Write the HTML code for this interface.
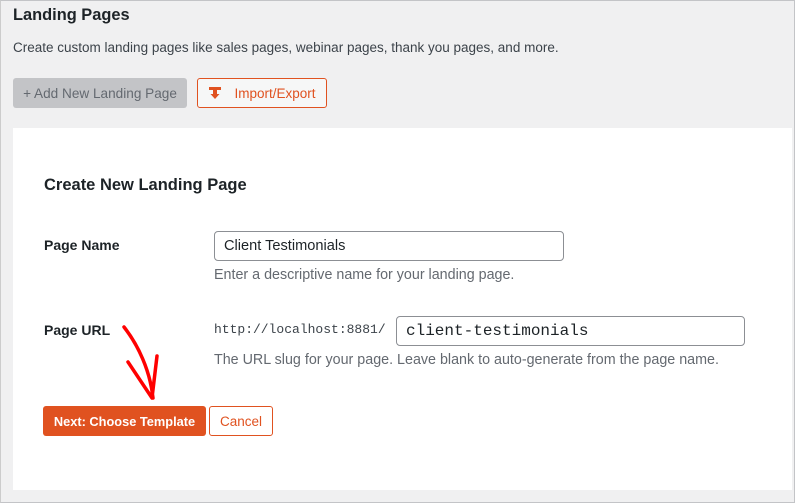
<!DOCTYPE html>
<html><head><style>
*{margin:0;padding:0;box-sizing:border-box}
body{width:795px;height:503px;background:#f0f0f1;font-family:"Liberation Sans",sans-serif;color:#1d2327;position:relative;overflow:hidden}
.frame{position:absolute;left:0;top:0;width:795px;height:503px;border:1px solid #c3c4c7;border-left-color:#ccc}
.a{position:absolute;white-space:nowrap}
.card{position:absolute;left:13px;top:128px;width:779px;height:362px;background:#fff}
.inp{position:absolute;border:1px solid #8c8f94;border-radius:4px;background:#fff;padding-left:9px;font-size:14.6px;color:#1d2327}
.btn{position:absolute;border-radius:3px;font-size:13px;display:flex;align-items:center;justify-content:center}
.help{font-size:14.3px;color:#646970}
</style></head><body>
<div class="frame"></div>
<div class="a" style="left:13px;top:6px;font-size:16.4px;font-weight:bold">Landing Pages</div>
<div class="a" style="left:13px;top:40px;font-size:13.5px;color:#3c434a">Create custom landing pages like sales pages, webinar pages, thank you pages, and more.</div>
<div class="btn" style="left:13px;top:78px;width:174px;height:30px;background:#c3c4c7;color:#646970;font-size:13.6px">+ Add New Landing Page</div>
<div class="btn" style="left:197px;top:78px;width:130px;height:30px;border:1px solid #e05220;color:#e05220;background:#f6f7f7;font-size:13.5px">
<svg width="14" height="14" viewBox="0 0 14 14" style="margin-right:12px"><rect x="1" y="1" width="12" height="3" fill="#e05220"/><path d="M5 4v4H2.5l4.5 5 4.5-5H9V4z" fill="#e05220"/></svg>Import/Export</div>
<div class="card"></div>
<div class="a" style="left:44px;top:176px;font-size:16.5px;font-weight:bold">Create New Landing Page</div>
<div class="a" style="left:44px;top:237px;font-size:14px;font-weight:bold">Page Name</div>
<div class="inp" style="left:214px;top:231px;width:350px;height:30px;line-height:28px">Client Testimonials</div>
<div class="a help" style="left:214px;top:267px">Enter a descriptive name for your landing page.</div>
<div class="a" style="left:44px;top:322px;font-size:14px;font-weight:bold">Page URL</div>
<div class="a" style="left:214px;top:322px;font-family:'Liberation Mono',monospace;font-size:13px;color:#3c434a">http://localhost:8881/</div>
<div class="inp" style="left:396px;top:316px;width:349px;height:30px;line-height:28px;font-family:'Liberation Mono',monospace;font-size:16px">client-testimonials</div>
<div class="a help" style="left:214px;top:352px">The URL slug for your page. Leave blank to auto-generate from the page name.</div>
<div class="btn" style="left:43px;top:406px;width:163px;height:30px;background:#e05220;color:#fff;font-weight:bold;font-size:12.8px">Next: Choose Template</div>
<div class="btn" style="left:209px;top:406px;width:64px;height:30px;border:1px solid #e05220;color:#e05220;background:#fff;font-size:13.5px">Cancel</div>
<svg class="a" style="left:0;top:0" width="795" height="503"><path d="M124 327C138 345 150 370 153 398M128 362L152 398L157 356" fill="none" stroke="#f00" stroke-width="3.5" stroke-linecap="round" stroke-linejoin="round"/></svg>
</body></html>
